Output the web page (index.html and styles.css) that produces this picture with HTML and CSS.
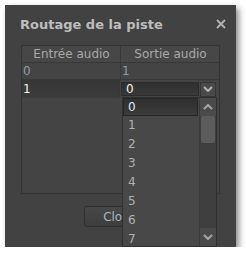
FILE: index.html
```html
<!DOCTYPE html>
<html lang="fr">
<head>
    <meta charset="UTF-8">
    <title>Routage de la piste</title>
    <link rel="stylesheet" href="styles.css">
</head>
<body>
    <div class="dialog">
        <div class="titlebar">
            <span class="title">Routage de la piste</span>
            <svg class="close" width="10" height="10" viewBox="0 0 10 10"><path d="M1 1 L9 9 M9 1 L1 9" fill="none" stroke="#b2b2b2" stroke-width="1.8"/></svg>
        </div>
        <div class="table">
            <div class="row header">
                <div class="cell">Entrée audio</div>
                <div class="cell">Sortie audio</div>
            </div>
            <div class="row">
                <div class="cell num">0</div>
                <div class="cell num">1</div>
            </div>
            <div class="row current">
                <div class="cell num sel">1</div>
                <div class="cell editor">
                    <div class="combo">0</div>
                    <div class="combo-btn">
                        <svg width="10" height="6" viewBox="0 0 10 6"><path d="M1 1 L5 5 L9 1" fill="none" stroke="#b4b4b4" stroke-width="2"/></svg>
                    </div>
                </div>
            </div>
        </div>
        <div class="buttons">
            <button class="btn">Close</button>
        </div>

        <!-- open dropdown of the combo -->
        <div class="popup">
            <div class="items">
                <div class="item active">0</div>
                <div class="item">1</div>
                <div class="item">2</div>
                <div class="item">3</div>
                <div class="item">4</div>
                <div class="item">5</div>
                <div class="item">6</div>
                <div class="item">7</div>
            </div>
            <div class="scrollbar">
                <div class="sb-btn">
                    <svg width="10" height="6" viewBox="0 0 10 6"><path d="M1 5 L5 1 L9 5" fill="none" stroke="#a8a8a8" stroke-width="2"/></svg>
                </div>
                <div class="sb-track">
                    <div class="sb-thumb"></div>
                </div>
                <div class="sb-btn">
                    <svg width="10" height="6" viewBox="0 0 10 6"><path d="M1 1 L5 5 L9 1" fill="none" stroke="#a8a8a8" stroke-width="2"/></svg>
                </div>
            </div>
        </div>
    </div>
</body>
</html>
```

FILE: styles.css
```css
body {
    margin: 0;
    background: #ffffff;
    font-family: "DejaVu Sans", sans-serif;
    font-size: 12px;
}
.dialog {
    position: relative;
    margin: 5px 0 0 5px;
    width: 231px;
    height: 242px;
    background: #424242;
    box-shadow: 3px 3px 6px rgba(0, 0, 0, 0.45);
    box-sizing: border-box;
    padding: 0 16px;
}
.titlebar {
    display: flex;
    align-items: center;
    justify-content: space-between;
    height: 40px;
}
.title {
    font-size: 13px;
    font-weight: bold;
    color: #bdbdbd;
    margin-left: -1px;
    margin-top: -1px;
}
.close {
    margin-right: -6px;
    margin-top: -2px;
}
.table {
    width: 199px;
    height: 149px;
    box-sizing: border-box;
    border: 1px solid #333333;
    background: #444444;
}
.row {
    display: flex;
    height: 16px;
    border-bottom: 1px solid #383838;
}
.row.current {
    height: 18px;
    border-bottom: none;
}
.cell {
    flex: 1;
    line-height: 16px;
    padding-left: 1px;
    color: #8e9aa6;
}
.cell + .cell {
    border-left: 1px solid #383838;
}
.header .cell {
    text-align: center;
    color: #a8a8a8;
    background: #474747;
}
.sel {
    background: linear-gradient(#363636, #3c3c3c);
    color: #f0f0f0;
    line-height: 18px;
}
.editor {
    display: flex;
    align-items: center;
    gap: 1px;
    padding: 0 2px 0 1px;
}
.combo {
    width: 78px;
    height: 14px;
    box-sizing: border-box;
    border: 1px solid #2c2c2c;
    background: linear-gradient(#2f2f2f, #393939);
    color: #f4f4f4;
    line-height: 13px;
    padding-left: 4px;
}
.combo-btn {
    width: 16px;
    height: 15px;
    box-sizing: border-box;
    border: 1px solid #353535;
    background: #4a4a4a;
    display: flex;
    align-items: center;
    justify-content: center;
}
.buttons {
    display: flex;
    justify-content: center;
    margin-top: 12px;
    margin-left: -2px;
}
.btn {
    width: 71px;
    height: 21px;
    border: 1px solid #303030;
    border-radius: 3px;
    background: linear-gradient(#474747, #3e3e3e);
    color: #a9b4bf;
    font-family: "DejaVu Sans", sans-serif;
    font-size: 12px;
    padding: 0;
}
.popup {
    position: absolute;
    left: 117px;
    top: 92px;
    width: 95px;
    height: 150px;
    box-sizing: border-box;
    border: 1px solid #303030;
    background: #484848;
    display: flex;
}
.items {
    flex: 1;
}
.item {
    height: 19px;
    line-height: 19px;
    padding-left: 5px;
    color: #b0b0b0;
}
.item.active {
    height: 18px;
    line-height: 17px;
    box-sizing: border-box;
    border: 1px solid #262626;
    background: linear-gradient(#303030, #3b3b3b);
    color: #dde6ff;
    padding-left: 4px;
    margin: 0 1px 0 0;
}
.scrollbar {
    width: 16px;
    display: flex;
    flex-direction: column;
    border-left: 1px solid #3a3a3a;
}
.sb-btn {
    height: 18px;
    background: #4a4a4a;
    display: flex;
    align-items: center;
    justify-content: center;
}
.sb-track {
    flex: 1;
    background: #3f3f3f;
}
.sb-thumb {
    height: 27px;
    margin: 0 1px;
    border-radius: 2px;
    background: #5c5c5c;
}
```
